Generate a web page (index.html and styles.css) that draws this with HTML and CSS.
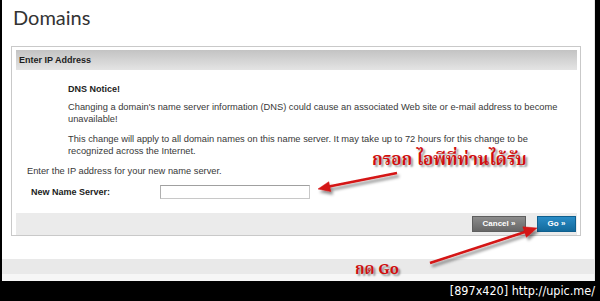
FILE: index.html
```html
<!DOCTYPE html>
<html>
<head>
<meta charset="utf-8">
<link rel="stylesheet" href="styles.css">
</head>
<body>
<div class="page">
  <div class="screen">
    <h1 class="title">Domains</h1>
    <div class="panel">
      <div class="panel-head">Enter IP Address</div>
      <div class="panel-body">
        <div class="notice">
          <h4 class="notice-title">DNS Notice!</h4>
          <p class="notice-text">Changing a domain's name server information (DNS) could cause an associated Web site or e-mail address to become unavailable!</p>
          <p class="notice-text">This change will apply to all domain names on this name server. It may take up to 72 hours for this change to be recognized across the Internet.</p>
        </div>
        <p class="intro">Enter the IP address for your new name server.</p>
        <div class="field-row">
          <label class="field-label">New Name Server:</label>
          <input class="field-input" type="text">
        </div>
      </div>
      <div class="panel-foot">
        <button class="btn btn-cancel">Cancel »</button>
        <button class="btn btn-go">Go »</button>
      </div>
    </div>
    <div class="bottom-bands">
      <div class="band-dark"></div>
      <div class="band-light"></div>
    </div>
  </div>
  <div class="watermark">[897x420] http://upic.me/</div>

  <svg class="arrows" width="600" height="301" viewBox="0 0 600 301">
    <defs>
      <filter id="sh" x="-20%" y="-50%" width="140%" height="200%">
        <feDropShadow dx="2" dy="3" stdDeviation="1.5" flood-color="#000" flood-opacity="0.45"/>
      </filter>
    </defs>
    <g filter="url(#sh)" fill="#d41414" stroke="#d41414">
      <line x1="397" y1="173" x2="329" y2="186.6" stroke-width="2.5"/>
      <polygon points="318,189 330.8,191.5 328.8,181.7" stroke-width="0.5"/>
      <line x1="430" y1="263" x2="525" y2="232" stroke-width="2.5"/>
      <polygon points="537,228 526.4,237.3 522.9,226.8" stroke-width="0.5"/>
    </g>
  </svg>
  <div class="note note-ip">กรอก ไอพีที่ท่านได้รับ</div>
  <div class="note note-go">กด Go</div>
</div>
</body>
</html>
```

FILE: styles.css
```css
html, body {
  margin: 0;
  padding: 0;
  background: #000;
}

.page {
  position: relative;
  width: 600px;
  height: 301px;
  overflow: hidden;
  background: #000;
}

.screen {
  margin-left: 2px;
  width: 593px;
  height: 281px;
  background: #fff;
  display: flex;
  flex-direction: column;
  box-sizing: border-box;
  border-right: 1px solid #e6e6e6;
}

.title {
  margin: 0;
  padding: 5px 0 0 11px;
  font-family: Lato, "Open Sans", sans-serif;
  font-weight: 400;
  font-size: 20px;
  line-height: 24px;
  color: #333;
}

.panel {
  margin: 17px 0 0 9px;
  width: 570px;
  box-sizing: border-box;
  border: 1px solid #c9c9c9;
  padding: 3px 3px 0 4px;
  font-family: "Liberation Sans", Arial, sans-serif;
  font-size: 9.3px;
  color: #383838;
}

.panel-head {
  height: 20px;
  line-height: 20px;
  padding-left: 3px;
  background: linear-gradient(#c3c3c3, #e4e4e4);
  font-weight: bold;
  font-size: 9px;
  color: #1e1e1e;
}

.panel-body {
  padding: 13px 0 13px 0;
}

.notice {
  padding: 0 8px 0 52px;
}

.notice-title {
  margin: 0 0 6px;
  font-size: 9px;
  line-height: 12px;
  font-weight: bold;
  color: #222;
}

.notice-text {
  margin: 0 0 8px;
  line-height: 12px;
}

.intro {
  margin: 0;
  padding-left: 11px;
  line-height: 12px;
}

.field-row {
  margin-top: 7px;
  height: 16px;
  display: flex;
  align-items: center;
  padding-left: 15px;
}

.field-label {
  width: 129px;
  font-weight: bold;
  font-size: 9px;
  color: #222;
}

.field-input {
  width: 150px;
  height: 14px;
  box-sizing: border-box;
  margin: 0;
  padding: 0;
  border: 1px solid #c8c8c8;
  border-top-color: #a0a0a0;
  border-left-color: #b0b0b0;
  background: #fff;
}

.panel-foot {
  height: 22px;
  background: #ebebeb;
  display: flex;
  justify-content: flex-end;
  align-items: center;
  gap: 11px;
  padding-right: 1px;
}

.btn {
  height: 16px;
  margin: 0;
  padding: 0;
  border: 1px solid transparent;
  font-family: "Liberation Sans", Arial, sans-serif;
  font-weight: bold;
  font-size: 8px;
  color: #fff;
  line-height: 14px;
}

.btn-cancel {
  width: 54px;
  background: linear-gradient(#8c8c8c, #666);
  border-color: #5e5e5e;
}

.btn-go {
  width: 39px;
  background: linear-gradient(#2a8cc6, #136a9c);
  border-color: #0f5f8e;
}

.bottom-bands {
  margin-top: auto;
}

.band-dark {
  height: 15px;
  background: #e9e9e9;
}

.band-light {
  height: 7px;
  background: #f6f6f6;
}

.watermark {
  height: 20px;
  line-height: 20px;
  text-align: right;
  padding-right: 5px;
  color: #fff;
  font-family: "Liberation Sans Narrow", "DejaVu Sans Condensed", sans-serif;
  font-size: 12.5px;
}

.arrows {
  position: absolute;
  left: 0;
  top: 0;
}

.note {
  position: absolute;
  color: #d00d0d;
  font-weight: bold;
  text-shadow: 2px 2px 2px rgba(0, 0, 0, 0.4);
  white-space: nowrap;
}

.note-ip {
  left: 372px;
  top: 149px;
  font-family: "Noto Serif Thai", "Noto Sans Thai", "Loma", "Garuda", "Liberation Serif", serif;
  font-size: 17px;
  line-height: 23px;
}

.note-go {
  left: 355px;
  top: 260px;
  font-family: "Noto Serif Thai", "Liberation Serif", serif;
  font-size: 15px;
  line-height: 20px;
}
```
